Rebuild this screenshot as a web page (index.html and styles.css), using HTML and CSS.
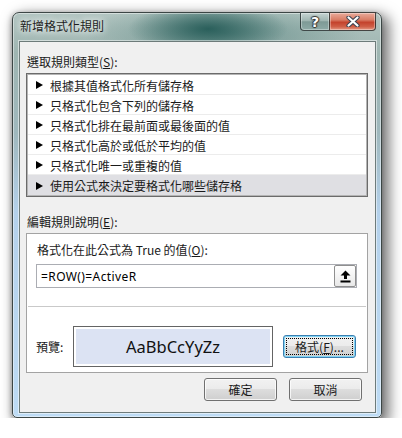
FILE: index.html
```html
<!DOCTYPE html>
<html lang="zh-Hant">
<head>
  <meta charset="UTF-8">
  <title>新增格式化規則</title>
  <link rel="stylesheet" href="styles.css">
</head>
<body>
  <div class="window">
    <div class="titlebar">
      <div class="title">新增格式化規則</div>
      <div class="caption-btns">
        <div class="cap help">?</div>
        <div class="cap close">
          <svg width="14" height="11" viewBox="0 0 14 11">
            <path d="M2.5 1.5 L11.5 9.5 M11.5 1.5 L2.5 9.5" stroke="#3b4250" stroke-width="4.2" stroke-linecap="round"/>
            <path d="M2.5 1.5 L11.5 9.5 M11.5 1.5 L2.5 9.5" stroke="#fff" stroke-width="2.2" stroke-linecap="round"/>
          </svg>
        </div>
      </div>
    </div>

    <div class="client">
      <div class="label">選取規則類型(<u>S</u>):</div>
      <div class="listbox">
        <div class="item"><span class="tri"></span>根據其值格式化所有儲存格</div>
        <div class="item"><span class="tri"></span>只格式化包含下列的儲存格</div>
        <div class="item"><span class="tri"></span>只格式化排在最前面或最後面的值</div>
        <div class="item"><span class="tri"></span>只格式化高於或低於平均的值</div>
        <div class="item"><span class="tri"></span>只格式化唯一或重複的值</div>
        <div class="item selected"><span class="tri"></span>使用公式來決定要格式化哪些儲存格</div>
      </div>

      <div class="label label-edit">編輯規則說明(<u>E</u>):</div>
      <div class="desc">
        <div class="desc-top">
          <div class="desc-label">格式化在此公式為 True 的值(<u>O</u>):</div>
          <div class="formula">
            <span class="formula-text">=ROW()=ActiveR</span>
            <div class="ref-btn">
              <svg width="11" height="13" viewBox="0 0 11 13">
                <path d="M5.5 0.5 L10.5 5.5 L7 5.5 L7 9 L4 9 L4 5.5 L0.5 5.5 Z" fill="#000"/>
                <rect x="0.5" y="10.5" width="10" height="2" fill="#000"/>
              </svg>
            </div>
          </div>
        </div>
        <div class="preview-row">
          <div class="preview-label">預覽:</div>
          <div class="preview"><span>AaBbCcYyZz</span></div>
          <button class="btn focused"><span class="focus-rect">格式(<u>F</u>)...</span></button>
        </div>
      </div>

      <div class="actions">
        <button class="btn">確定</button>
        <button class="btn">取消</button>
      </div>
    </div>
  </div>
</body>
</html>
```

FILE: styles.css
```css
body {
  margin: 0;
  background: #fff;
  font-family: "Noto Sans CJK TC", "Noto Sans", sans-serif;
  font-size: 12px;
  color: #1a1a1a;
}

.window {
  margin: 12px 0 0 12px;
  width: 370px;
  height: 406px;
  box-sizing: border-box;
  border: 1px solid #3c4645;
  border-radius: 7px 7px 5px 5px;
  padding: 0 5px 4px 6px;
  display: flex;
  flex-direction: column;
  background:
    radial-gradient(ellipse 80px 26px at 195px 16px, rgba(38, 92, 88, 0.95), rgba(38, 92, 88, 0)),
    radial-gradient(ellipse 140px 30px at 210px 20px, rgba(70, 120, 115, 0.6), rgba(70, 120, 115, 0)),
    linear-gradient(to bottom, #b2c5c1 0px, #9eb5b1 40px, #9fb8bd 120px, #b4d1eb 200px, #bddbf4 100%);
  box-shadow:
    inset 0 0 0 1px rgba(255, 255, 255, 0.45),
    5px 5px 14px 2px rgba(0, 0, 0, 0.55),
    -1px 1px 5px rgba(0, 0, 0, 0.25);
}

.titlebar {
  height: 28px;
  display: flex;
  justify-content: space-between;
  align-items: flex-start;
}

.title {
  padding: 5px 0 0 1px;
  line-height: 16px;
  color: #1e1e1e;
  text-shadow: 0 0 6px rgba(255, 255, 255, 0.95), 0 0 10px rgba(255, 255, 255, 0.7);
}

.caption-btns {
  display: flex;
  margin-top: -1px;
}

.cap {
  height: 19px;
  box-sizing: border-box;
  display: flex;
  align-items: center;
  justify-content: center;
  border: 1px solid rgba(40, 50, 50, 0.85);
  box-shadow: inset 0 0 0 1px rgba(255, 255, 255, 0.35);
}

.help {
  width: 29px;
  border-right: none;
  border-radius: 0 0 0 4px;
  background: linear-gradient(to bottom, #c6d4d2 0%, #9fb5b1 45%, #7e9a96 52%, #8eaaa6 100%);
  color: #fff;
  font-family: "DejaVu Sans", sans-serif;
  font-weight: bold;
  font-size: 14px;
  text-shadow: 0 0 1px #333, 1px 0 1px #333, -1px 0 1px #333, 0 1px 1px #333, 0 -1px 1px #333;
}

.close {
  width: 47px;
  border-radius: 0 0 4px 0;
  background: linear-gradient(to bottom, #e9ab9b 0%, #d97d66 40%, #c4432d 55%, #cf5f47 80%, #e59a86 100%);
}

.client {
  flex: 1;
  border: 1px solid #6d7b7a;
  background: #f0f0f0;
  padding: 12px 7px 0 6px;
  box-shadow: 0 0 0 1px rgba(255, 255, 255, 0.5);
}

.label {
  line-height: 16px;
  padding-left: 1px;
}

.listbox {
  margin-top: 3px;
  border: 1px solid #6b6b6b;
  padding: 1px;
  background: #fff;
  box-shadow: inset 0 0 0 1px #b4b4b4;
}

.item {
  height: 20px;
  box-sizing: border-box;
  border-bottom: 1px solid #ececec;
  display: flex;
  align-items: center;
  padding: 1px 0 0 8px;
  background: #fff;
}

.item.selected {
  background: #dfdfe3;
  border-bottom: none;
}

.tri {
  width: 0;
  height: 0;
  border-left: 7px solid #000;
  border-top: 4.5px solid transparent;
  border-bottom: 4.5px solid transparent;
  margin-right: 7px;
}

.label-edit {
  margin-top: 17px;
}

.desc {
  margin-top: 3px;
  height: 140px;
  box-sizing: border-box;
  border: 1px solid #a3a3a3;
  background: #fff;
}

.desc-top {
  padding: 8px 9px 18px 8px;
  margin: 0 1px;
  border-bottom: 1px solid #c9c9c9;
}

.desc-label {
  line-height: 16px;
  padding-left: 1px;
}

.formula {
  margin-top: 6px;
  height: 24px;
  box-sizing: border-box;
  border: 1px solid #abadb3;
  display: flex;
  align-items: center;
  justify-content: space-between;
  padding-left: 4px;
}

.formula-text {
  font-family: "Noto Sans", sans-serif;
  font-size: 12px;
  letter-spacing: 0.4px;
  color: #000;
}

.ref-btn {
  width: 22px;
  height: 22px;
  box-sizing: border-box;
  border: 1px solid #8f8f8f;
  border-radius: 2px;
  background: linear-gradient(to bottom, #ffffff, #f4f4f4 50%, #e8e8e8);
  display: flex;
  align-items: center;
  justify-content: center;
}

.preview-row {
  display: flex;
  align-items: center;
  padding: 19px 0 5px 9px;
}

.preview-label {
  width: 37px;
  line-height: 16px;
}

.preview {
  width: 200px;
  height: 41px;
  box-sizing: border-box;
  border: 1px solid #646464;
  padding: 2px;
  background: #fff;
}

.preview span {
  display: flex;
  height: 100%;
  align-items: center;
  justify-content: center;
  background: #dce3f3;
  font-family: "Noto Sans", sans-serif;
  font-size: 16.5px;
  color: #111;
}

.btn {
  width: 73px;
  height: 23px;
  box-sizing: border-box;
  border: 1px solid #707070;
  border-radius: 3px;
  background: linear-gradient(to bottom, #f2f2f2 0%, #ebebeb 50%, #dddddd 50%, #cfcfcf 100%);
  box-shadow: inset 0 0 0 1px rgba(255, 255, 255, 0.75);
  font-family: "Noto Sans CJK TC", "Noto Sans", sans-serif;
  font-size: 12px;
  color: #1a1a1a;
  padding: 0;
  line-height: 19px;
}

.preview-row .btn {
  margin-left: 10px;
  margin-top: -1px;
}

.btn.focused {
  border-color: #3c7fb1;
  box-shadow: inset 0 0 0 1px #7fd4f5;
  padding: 2px;
}

.focus-rect {
  display: block;
  height: 100%;
  box-sizing: border-box;
  border: 1px dotted #000;
  line-height: 15px;
}

.actions {
  margin-top: 5px;
  padding-right: 6px;
  display: flex;
  justify-content: flex-end;
  gap: 12px;
}
```
